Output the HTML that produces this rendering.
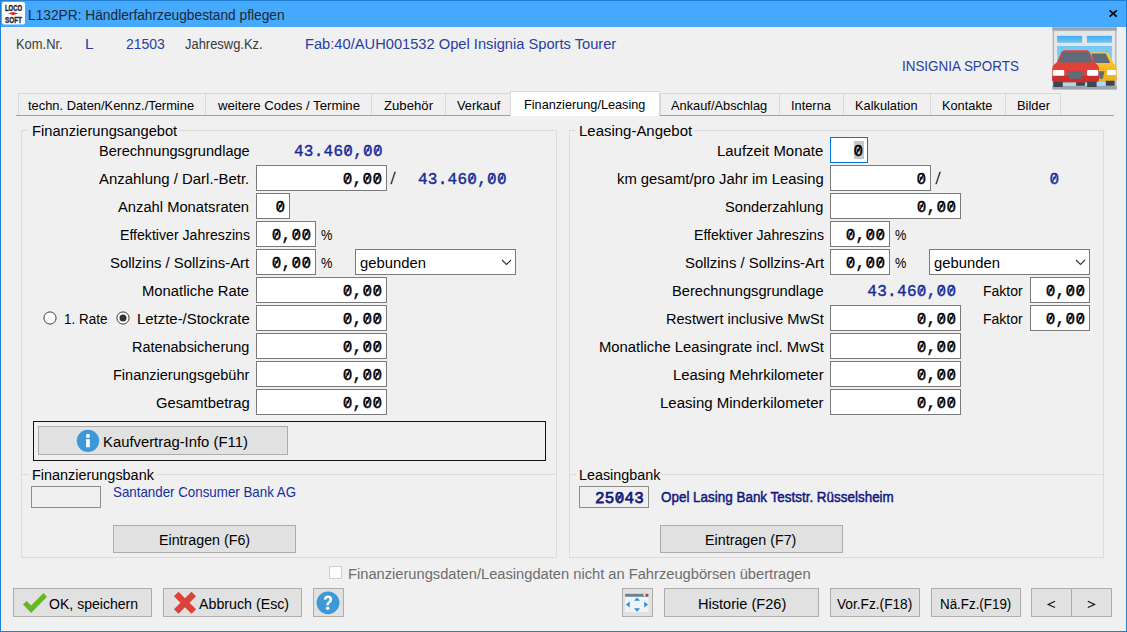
<!DOCTYPE html>
<html><head><meta charset="utf-8"><style>
html,body{margin:0;padding:0;width:1127px;height:632px;overflow:hidden;background:#f0f0f0}
body{position:relative;font-family:"Liberation Sans", sans-serif;}
.a{position:absolute;}
.t{position:absolute;white-space:nowrap;line-height:1;transform-origin:0 0;}
</style></head><body>
<div class="a" style="left:0px;top:0px;width:1127px;height:1px;background:#1f80d6;"></div>
<div class="a" style="left:0px;top:0px;width:1px;height:632px;background:#1f80d6;"></div>
<div class="a" style="left:1126px;top:0px;width:1px;height:632px;background:#1f80d6;"></div>
<div class="a" style="left:0px;top:631px;width:1127px;height:1px;background:#1f80d6;"></div>
<div class="a" style="left:1px;top:1px;width:1125px;height:26px;background:#45a9fd;"></div>
<span class="t" style="left:27.50px;top:7px;font-size:15.5px;color:#202830;transform:scaleX(0.8864);">L132PR: Händlerfahrzeugbestand pflegen</span>
<svg class="a" style="left:1108px;top:9px" width="11" height="10" viewBox="0 0 11 10"><path d="M1.6 1.3 L8.8 7.7 M8.8 1.3 L1.6 7.7" stroke="#000" stroke-width="1.6"/></svg>
<svg class="a" style="left:0;top:0" width="28" height="28" viewBox="0 0 632 632">
<rect x="45" y="45" width="520" height="510" rx="50" fill="#fff"/>
<text x="112" y="252" font-family="Liberation Sans" font-weight="700" font-size="215" textLength="386" lengthAdjust="spacingAndGlyphs" fill="#23262b" stroke="#23262b" stroke-width="10">LOCO</text>
<text x="112" y="512" font-family="Liberation Sans" font-weight="700" font-size="205" textLength="383" lengthAdjust="spacingAndGlyphs" fill="#2a2d33" stroke="#2a2d33" stroke-width="10">SOFT</text>
<rect x="110" y="299" width="390" height="6" fill="#c8c8c8"/>
<path d="M185 303 L295 272 L410 303 L295 336 Z" fill="#e8141a"/>
</svg>
<span class="t" style="left:15.60px;top:36px;font-size:15.5px;color:#3a3a3a;transform:scaleX(0.8339);">Kom.Nr.</span>
<span class="t" style="left:85.00px;top:36px;font-size:15.5px;color:#2740a2;">L</span>
<span class="t" style="left:126.40px;top:36px;font-size:15.5px;color:#2740a2;transform:scaleX(0.9026);">21503</span>
<span class="t" style="left:185.20px;top:36px;font-size:15.5px;color:#3a3a3a;transform:scaleX(0.8344);">Jahreswg.Kz.</span>
<span class="t" style="left:304.50px;top:36px;font-size:15.5px;color:#2740a2;transform:scaleX(0.9465);">Fab:40/AUH001532 Opel Insignia Sports Tourer</span>
<span class="t" style="left:901.80px;top:58px;font-size:15.5px;color:#2740a2;transform:scaleX(0.8658);">INSIGNIA SPORTS</span>
<svg class="a" style="left:1040px;top:20px" width="87" height="80" viewBox="0 0 687 632">
<rect x="97" y="57" width="510" height="30" fill="#9aa5b0"/>
<rect x="103" y="85" width="498" height="440" fill="#e3e7ea"/>
<rect x="100" y="85" width="10" height="440" fill="#a9b2ba"/>
<rect x="594" y="85" width="10" height="440" fill="#a9b2ba"/>
<defs><linearGradient id="gw" x1="0" y1="0" x2="0" y2="1"><stop offset="0" stop-color="#42adf0"/><stop offset="1" stop-color="#72c6f3"/></linearGradient>
<linearGradient id="gy" x1="0" y1="0" x2="0" y2="1"><stop offset="0" stop-color="#fbcb3a"/><stop offset="1" stop-color="#f0ae1c"/></linearGradient>
<linearGradient id="go" x1="0" y1="0" x2="0" y2="1"><stop offset="0" stop-color="#76c6f4"/><stop offset="1" stop-color="#a9dcf6"/></linearGradient></defs>
<rect x="135" y="125" width="198" height="55" fill="url(#gw)"/>
<rect x="370" y="125" width="198" height="55" fill="url(#gw)"/>
<rect x="135" y="205" width="433" height="315" fill="url(#go)"/>
<rect x="97" y="520" width="510" height="30" fill="#9aa5b0"/>
<path d="M400 255 L520 255 Q540 258 548 275 L580 345 L600 360 Q607 370 605 400 L605 470 Q600 485 585 485 L445 485 L445 340 Z" fill="url(#gy)"/>
<path d="M405 265 L520 265 L555 340 L425 340 Z" fill="#5e6b78"/>
<rect x="530" y="395" width="70" height="40" rx="6" fill="#fff"/>
<path d="M460 405 L510 405 L495 465 L470 465 Z" fill="#5e6b78"/>
<rect x="520" y="480" width="70" height="40" rx="4" fill="#3d4650"/>
<rect x="285" y="485" width="70" height="35" rx="4" fill="#3d4650"/>
<path d="M190 238 L370 238 Q385 240 392 255 L430 335 L455 355 Q465 365 465 385 L465 470 Q462 492 440 492 L120 492 Q97 490 97 470 L97 385 Q97 365 107 355 L132 335 L168 255 Q175 240 190 238 Z" fill="#e0413a"/>
<path d="M97 440 L465 440 L465 470 Q462 492 440 492 L120 492 Q97 490 97 470 Z" fill="#c9302c"/>
<path d="M180 255 L380 255 L412 335 L148 335 Z" fill="#5e6b78"/>
<rect x="103" y="395" width="88" height="45" rx="6" fill="#fff"/>
<rect x="372" y="395" width="88" height="45" rx="6" fill="#fff"/>
<path d="M210 405 L350 405 L325 465 L235 465 Z" fill="#5e6b78"/>
<rect x="105" y="488" width="75" height="42" rx="5" fill="#3d4650"/>
<rect x="372" y="488" width="75" height="42" rx="5" fill="#3d4650"/>
</svg>
<div class="a" style="left:18px;top:93px;width:188px;height:23px;border:1px solid #d9d9d9;box-sizing:border-box;"></div>
<div class="a" style="left:205px;top:93px;width:167px;height:23px;border:1px solid #d9d9d9;box-sizing:border-box;"></div>
<div class="a" style="left:371px;top:93px;width:75px;height:23px;border:1px solid #d9d9d9;box-sizing:border-box;"></div>
<div class="a" style="left:445px;top:93px;width:66px;height:23px;border:1px solid #d9d9d9;box-sizing:border-box;"></div>
<div class="a" style="left:660px;top:93px;width:120px;height:23px;border:1px solid #d9d9d9;box-sizing:border-box;"></div>
<div class="a" style="left:779px;top:93px;width:65px;height:23px;border:1px solid #d9d9d9;box-sizing:border-box;"></div>
<div class="a" style="left:843px;top:93px;width:88px;height:23px;border:1px solid #d9d9d9;box-sizing:border-box;"></div>
<div class="a" style="left:930px;top:93px;width:76px;height:23px;border:1px solid #d9d9d9;box-sizing:border-box;"></div>
<div class="a" style="left:1005px;top:93px;width:56px;height:23px;border:1px solid #d9d9d9;box-sizing:border-box;"></div>
<div class="a" style="left:16px;top:115px;width:1098px;height:1px;background:#a0a0a0;"></div>
<span class="t" style="left:27.70px;top:99px;font-size:13.0px;color:#000;transform:scaleX(0.9905);">techn. Daten/Kennz./Termine</span>
<span class="t" style="left:217.70px;top:99px;font-size:13.0px;color:#000;transform:scaleX(1.0150);">weitere Codes / Termine</span>
<span class="t" style="left:384.00px;top:99px;font-size:13.0px;color:#000;transform:scaleX(1.0124);">Zubehör</span>
<span class="t" style="left:456.80px;top:99px;font-size:13.0px;color:#000;transform:scaleX(0.9842);">Verkauf</span>
<span class="t" style="left:670.50px;top:99px;font-size:13.0px;color:#000;transform:scaleX(0.9857);">Ankauf/Abschlag</span>
<span class="t" style="left:790.90px;top:99px;font-size:13.0px;color:#000;transform:scaleX(0.9852);">Interna</span>
<span class="t" style="left:855.00px;top:99px;font-size:13.0px;color:#000;transform:scaleX(0.9843);">Kalkulation</span>
<span class="t" style="left:941.80px;top:99px;font-size:13.0px;color:#000;transform:scaleX(0.9825);">Kontakte</span>
<span class="t" style="left:1017.00px;top:99px;font-size:13.0px;color:#000;transform:scaleX(0.9940);">Bilder</span>
<div class="a" style="left:510px;top:91px;width:150px;height:25px;background:#fff;border:1px solid #d9d9d9;box-sizing:border-box;border-bottom:none;"></div>
<span class="t" style="left:524.30px;top:98px;font-size:13.0px;color:#000;transform:scaleX(0.9767);">Finanzierung/Leasing</span>
<div class="a" style="left:21px;top:130px;width:536px;height:428px;border:1px solid #dcdcdc;box-sizing:border-box;"></div>
<div class="a" style="left:28px;top:128px;width:151px;height:4px;background:#f0f0f0;"></div>
<span class="t" style="left:31.60px;top:123px;font-size:15.5px;color:#000;transform:scaleX(0.9465);">Finanzierungsangebot</span>
<div class="a" style="left:569px;top:130px;width:535px;height:428px;border:1px solid #dcdcdc;box-sizing:border-box;"></div>
<div class="a" style="left:576px;top:128px;width:118px;height:4px;background:#f0f0f0;"></div>
<span class="t" style="left:578.70px;top:123px;font-size:15.5px;color:#000;transform:scaleX(0.9650);">Leasing-Angebot</span>
<div class="a" style="left:22px;top:474px;width:534px;height:1px;background:#dcdcdc;"></div>
<div class="a" style="left:29px;top:472px;width:127px;height:4px;background:#f0f0f0;"></div>
<span class="t" style="left:31.50px;top:467px;font-size:15.5px;color:#000;transform:scaleX(0.9305);">Finanzierungsbank</span>
<div class="a" style="left:570px;top:474px;width:533px;height:1px;background:#dcdcdc;"></div>
<div class="a" style="left:576px;top:472px;width:86px;height:4px;background:#f0f0f0;"></div>
<span class="t" style="left:578.60px;top:467px;font-size:15.5px;color:#000;transform:scaleX(0.9250);">Leasingbank</span>
<span class="t" style="left:98.80px;top:143px;font-size:15.5px;color:#000;transform:scaleX(0.9401);">Berechnungsgrundlage</span>
<span class="t" style="left:99.30px;top:171px;font-size:15.5px;color:#000;transform:scaleX(0.9634);">Anzahlung / Darl.-Betr.</span>
<span class="t" style="left:118.40px;top:199px;font-size:15.5px;color:#000;transform:scaleX(0.9507);">Anzahl Monatsraten</span>
<span class="t" style="left:119.50px;top:227px;font-size:15.5px;color:#000;transform:scaleX(0.9110);">Effektiver Jahreszins</span>
<span class="t" style="left:110.30px;top:255px;font-size:15.5px;color:#000;transform:scaleX(0.9620);">Sollzins / Sollzins-Art</span>
<span class="t" style="left:142.40px;top:283px;font-size:15.5px;color:#000;transform:scaleX(0.9562);">Monatliche Rate</span>
<span class="t" style="left:136.70px;top:311px;font-size:15.5px;color:#000;transform:scaleX(0.9625);">Letzte-/Stockrate</span>
<span class="t" style="left:132.20px;top:339px;font-size:15.5px;color:#000;transform:scaleX(0.9324);">Ratenabsicherung</span>
<span class="t" style="left:113.20px;top:367px;font-size:15.5px;color:#000;transform:scaleX(0.9361);">Finanzierungsgebühr</span>
<span class="t" style="left:155.90px;top:395px;font-size:15.5px;color:#000;transform:scaleX(0.9532);">Gesamtbetrag</span>
<span class="t" style="left:293.60px;top:144px;font-size:16.0px;color:#182c98;font-family:'Liberation Mono',monospace;font-weight:700;letter-spacing:0.3px;transform:scaleX(0.9965);font-weight:400;-webkit-text-stroke:0.4px #182c98;">43.460,00</span>
<div class="a" style="left:256px;top:165px;width:131px;height:26px;background:#fff;border:1px solid #7a7a7a;box-sizing:border-box;"></div>
<span class="t" style="left:342.70px;top:172px;font-size:16.0px;color:#000;font-family:'Liberation Mono',monospace;font-weight:700;letter-spacing:0.3px;font-weight:400;-webkit-text-stroke:0.4px #000;">0,00</span>
<span class="t" style="left:389.60px;top:172px;font-size:16.0px;color:#000;font-family:'Liberation Mono',monospace;transform:scaleX(0.6250);-webkit-text-stroke:0.4px #000;">/</span>
<span class="t" style="left:417.50px;top:172px;font-size:16.0px;color:#182c98;font-family:'Liberation Mono',monospace;font-weight:700;letter-spacing:0.3px;transform:scaleX(0.9965);font-weight:400;-webkit-text-stroke:0.4px #182c98;">43.460,00</span>
<div class="a" style="left:256px;top:193px;width:34px;height:26px;background:#fff;border:1px solid #7a7a7a;box-sizing:border-box;"></div>
<span class="t" style="left:275.40px;top:200px;font-size:16.0px;color:#000;font-family:'Liberation Mono',monospace;font-weight:700;letter-spacing:0.3px;font-weight:400;-webkit-text-stroke:0.4px #000;">0</span>
<div class="a" style="left:256px;top:221px;width:60px;height:26px;background:#fff;border:1px solid #7a7a7a;box-sizing:border-box;"></div>
<span class="t" style="left:271.70px;top:228px;font-size:16.0px;color:#000;font-family:'Liberation Mono',monospace;font-weight:700;letter-spacing:0.3px;font-weight:400;-webkit-text-stroke:0.4px #000;">0,00</span>
<span class="t" style="left:321.20px;top:227px;font-size:15.5px;color:#000;transform:scaleX(0.8261);">%</span>
<div class="a" style="left:256px;top:249px;width:60px;height:26px;background:#fff;border:1px solid #7a7a7a;box-sizing:border-box;"></div>
<span class="t" style="left:271.70px;top:256px;font-size:16.0px;color:#000;font-family:'Liberation Mono',monospace;font-weight:700;letter-spacing:0.3px;font-weight:400;-webkit-text-stroke:0.4px #000;">0,00</span>
<span class="t" style="left:321.20px;top:255px;font-size:15.5px;color:#000;transform:scaleX(0.8261);">%</span>
<div class="a" style="left:355px;top:249px;width:161px;height:26px;background:#fff;border:1px solid #7a7a7a;box-sizing:border-box;"></div>
<span class="t" style="left:360.30px;top:255px;font-size:15.5px;color:#000;transform:scaleX(0.9565);">gebunden</span>
<svg class="a" style="left:501px;top:259px" width="11" height="7" viewBox="0 0 11 7"><path d="M1 1 L5.5 5.5 L10 1" stroke="#333" stroke-width="1.1" fill="none"/></svg>
<div class="a" style="left:256px;top:277px;width:131px;height:26px;background:#fff;border:1px solid #7a7a7a;box-sizing:border-box;"></div>
<span class="t" style="left:342.70px;top:284px;font-size:16.0px;color:#000;font-family:'Liberation Mono',monospace;font-weight:700;letter-spacing:0.3px;font-weight:400;-webkit-text-stroke:0.4px #000;">0,00</span>
<div class="a" style="left:256px;top:305px;width:131px;height:26px;background:#fff;border:1px solid #7a7a7a;box-sizing:border-box;"></div>
<span class="t" style="left:342.70px;top:312px;font-size:16.0px;color:#000;font-family:'Liberation Mono',monospace;font-weight:700;letter-spacing:0.3px;font-weight:400;-webkit-text-stroke:0.4px #000;">0,00</span>
<div class="a" style="left:256px;top:333px;width:131px;height:26px;background:#fff;border:1px solid #7a7a7a;box-sizing:border-box;"></div>
<span class="t" style="left:342.70px;top:340px;font-size:16.0px;color:#000;font-family:'Liberation Mono',monospace;font-weight:700;letter-spacing:0.3px;font-weight:400;-webkit-text-stroke:0.4px #000;">0,00</span>
<div class="a" style="left:256px;top:361px;width:131px;height:26px;background:#fff;border:1px solid #7a7a7a;box-sizing:border-box;"></div>
<span class="t" style="left:342.70px;top:368px;font-size:16.0px;color:#000;font-family:'Liberation Mono',monospace;font-weight:700;letter-spacing:0.3px;font-weight:400;-webkit-text-stroke:0.4px #000;">0,00</span>
<div class="a" style="left:256px;top:389px;width:131px;height:26px;background:#fff;border:1px solid #7a7a7a;box-sizing:border-box;"></div>
<span class="t" style="left:342.70px;top:396px;font-size:16.0px;color:#000;font-family:'Liberation Mono',monospace;font-weight:700;letter-spacing:0.3px;font-weight:400;-webkit-text-stroke:0.4px #000;">0,00</span>
<svg class="a" style="left:43.4px;top:310.6px" width="14" height="14" viewBox="0 0 14 14"><circle cx="7" cy="7" r="6.1" fill="#fff" stroke="#3c3c3c" stroke-width="1"/></svg>
<span class="t" style="left:63.80px;top:311px;font-size:15.5px;color:#000;transform:scaleX(0.8680);">1. Rate</span>
<svg class="a" style="left:116.4px;top:310.6px" width="14" height="14" viewBox="0 0 14 14"><circle cx="7" cy="7" r="6.1" fill="#fff" stroke="#3c3c3c" stroke-width="1"/><circle cx="7" cy="7" r="3.5" fill="#333"/></svg>
<div class="a" style="left:33px;top:421px;width:513px;height:40px;border:1.5px solid #111;box-sizing:border-box;"></div>
<div class="a" style="left:38px;top:426px;width:250px;height:29px;background:#e1e1e1;border:1px solid #adadad;box-sizing:border-box;"></div>
<svg class="a" style="left:74px;top:428px" width="28" height="26" viewBox="0 0 681 632">
<circle cx="340" cy="312" r="272" fill="#3d98d8"/>
<circle cx="340" cy="192" r="50" fill="#fff"/>
<path d="M290 275 L385 275 L385 465 L295 465 L295 320 L290 310 Z" fill="#fff"/>
</svg>
<span class="t" style="left:102.50px;top:434px;font-size:15.5px;color:#000;transform:scaleX(0.9570);">Kaufvertrag-Info (F11)</span>
<div class="a" style="left:31px;top:486px;width:70px;height:22px;background:#f0f0f0;border:1px solid #8c8c8c;box-sizing:border-box;"></div>
<span class="t" style="left:113.20px;top:485px;font-size:14.5px;color:#14309e;transform:scaleX(0.9196);">Santander Consumer Bank AG</span>
<div class="a" style="left:113px;top:525px;width:183px;height:28px;background:#e1e1e1;border:1px solid #adadad;box-sizing:border-box;"></div>
<span class="t" style="left:158.70px;top:532px;font-size:15.5px;color:#000;transform:scaleX(0.9193);">Eintragen (F6)</span>
<span class="t" style="left:717.40px;top:143px;font-size:15.5px;color:#000;transform:scaleX(0.9628);">Laufzeit Monate</span>
<span class="t" style="left:616.90px;top:171px;font-size:15.5px;color:#000;transform:scaleX(0.9561);">km gesamt/pro Jahr im Leasing</span>
<span class="t" style="left:725.20px;top:199px;font-size:15.5px;color:#000;transform:scaleX(0.9434);">Sonderzahlung</span>
<span class="t" style="left:693.60px;top:227px;font-size:15.5px;color:#000;transform:scaleX(0.9110);">Effektiver Jahreszins</span>
<span class="t" style="left:684.50px;top:255px;font-size:15.5px;color:#000;transform:scaleX(0.9613);">Sollzins / Sollzins-Art</span>
<span class="t" style="left:672.00px;top:283px;font-size:15.5px;color:#000;transform:scaleX(0.9457);">Berechnungsgrundlage</span>
<span class="t" style="left:665.80px;top:311px;font-size:15.5px;color:#000;transform:scaleX(0.9393);">Restwert inclusive MwSt</span>
<span class="t" style="left:598.70px;top:339px;font-size:15.5px;color:#000;transform:scaleX(0.9562);">Monatliche Leasingrate incl. MwSt</span>
<span class="t" style="left:673.00px;top:367px;font-size:15.5px;color:#000;transform:scaleX(0.9605);">Leasing Mehrkilometer</span>
<span class="t" style="left:660.00px;top:395px;font-size:15.5px;color:#000;transform:scaleX(0.9686);">Leasing Minderkilometer</span>
<div class="a" style="left:830px;top:137px;width:38px;height:26px;background:#fff;border:1px solid #0078d7;box-sizing:border-box;"></div>
<div class="a" style="left:854px;top:141px;width:10px;height:18px;background:#c8c8c8;"></div>
<span class="t" style="left:853.40px;top:144px;font-size:16.0px;color:#000;font-family:'Liberation Mono',monospace;font-weight:700;letter-spacing:0.3px;font-weight:400;-webkit-text-stroke:0.4px #000;">0</span>
<div class="a" style="left:830px;top:165px;width:101px;height:26px;background:#fff;border:1px solid #7a7a7a;box-sizing:border-box;"></div>
<span class="t" style="left:916.40px;top:172px;font-size:16.0px;color:#000;font-family:'Liberation Mono',monospace;font-weight:700;letter-spacing:0.3px;font-weight:400;-webkit-text-stroke:0.4px #000;">0</span>
<span class="t" style="left:935.00px;top:172px;font-size:16.0px;color:#000;font-family:'Liberation Mono',monospace;transform:scaleX(0.6250);-webkit-text-stroke:0.4px #000;">/</span>
<span class="t" style="left:1049.40px;top:172px;font-size:16.0px;color:#182c98;font-family:'Liberation Mono',monospace;font-weight:700;letter-spacing:0.3px;font-weight:400;-webkit-text-stroke:0.4px #182c98;">0</span>
<div class="a" style="left:830px;top:193px;width:131px;height:26px;background:#fff;border:1px solid #7a7a7a;box-sizing:border-box;"></div>
<span class="t" style="left:916.70px;top:200px;font-size:16.0px;color:#000;font-family:'Liberation Mono',monospace;font-weight:700;letter-spacing:0.3px;font-weight:400;-webkit-text-stroke:0.4px #000;">0,00</span>
<div class="a" style="left:830px;top:221px;width:60px;height:26px;background:#fff;border:1px solid #7a7a7a;box-sizing:border-box;"></div>
<span class="t" style="left:845.70px;top:228px;font-size:16.0px;color:#000;font-family:'Liberation Mono',monospace;font-weight:700;letter-spacing:0.3px;font-weight:400;-webkit-text-stroke:0.4px #000;">0,00</span>
<span class="t" style="left:895.40px;top:227px;font-size:15.5px;color:#000;transform:scaleX(0.8188);">%</span>
<div class="a" style="left:830px;top:249px;width:60px;height:26px;background:#fff;border:1px solid #7a7a7a;box-sizing:border-box;"></div>
<span class="t" style="left:845.70px;top:256px;font-size:16.0px;color:#000;font-family:'Liberation Mono',monospace;font-weight:700;letter-spacing:0.3px;font-weight:400;-webkit-text-stroke:0.4px #000;">0,00</span>
<span class="t" style="left:895.40px;top:255px;font-size:15.5px;color:#000;transform:scaleX(0.8188);">%</span>
<div class="a" style="left:929px;top:249px;width:161px;height:26px;background:#fff;border:1px solid #7a7a7a;box-sizing:border-box;"></div>
<span class="t" style="left:934.30px;top:255px;font-size:15.5px;color:#000;transform:scaleX(0.9565);">gebunden</span>
<svg class="a" style="left:1075px;top:259px" width="11" height="7" viewBox="0 0 11 7"><path d="M1 1 L5.5 5.5 L10 1" stroke="#333" stroke-width="1.1" fill="none"/></svg>
<span class="t" style="left:867.30px;top:284px;font-size:16.0px;color:#182c98;font-family:'Liberation Mono',monospace;font-weight:700;letter-spacing:0.3px;font-weight:400;-webkit-text-stroke:0.4px #182c98;">43.460,00</span>
<span class="t" style="left:982.60px;top:283px;font-size:15.5px;color:#000;transform:scaleX(0.9043);">Faktor</span>
<div class="a" style="left:1030px;top:277px;width:60px;height:26px;background:#fff;border:1px solid #7a7a7a;box-sizing:border-box;"></div>
<span class="t" style="left:1045.70px;top:284px;font-size:16.0px;color:#000;font-family:'Liberation Mono',monospace;font-weight:700;letter-spacing:0.3px;font-weight:400;-webkit-text-stroke:0.4px #000;">0,00</span>
<div class="a" style="left:830px;top:305px;width:131px;height:26px;background:#fff;border:1px solid #7a7a7a;box-sizing:border-box;"></div>
<span class="t" style="left:916.70px;top:312px;font-size:16.0px;color:#000;font-family:'Liberation Mono',monospace;font-weight:700;letter-spacing:0.3px;font-weight:400;-webkit-text-stroke:0.4px #000;">0,00</span>
<span class="t" style="left:982.60px;top:311px;font-size:15.5px;color:#000;transform:scaleX(0.9043);">Faktor</span>
<div class="a" style="left:1030px;top:305px;width:60px;height:26px;background:#fff;border:1px solid #7a7a7a;box-sizing:border-box;"></div>
<span class="t" style="left:1045.70px;top:312px;font-size:16.0px;color:#000;font-family:'Liberation Mono',monospace;font-weight:700;letter-spacing:0.3px;font-weight:400;-webkit-text-stroke:0.4px #000;">0,00</span>
<div class="a" style="left:830px;top:333px;width:131px;height:26px;background:#fff;border:1px solid #7a7a7a;box-sizing:border-box;"></div>
<span class="t" style="left:916.70px;top:340px;font-size:16.0px;color:#000;font-family:'Liberation Mono',monospace;font-weight:700;letter-spacing:0.3px;font-weight:400;-webkit-text-stroke:0.4px #000;">0,00</span>
<div class="a" style="left:830px;top:361px;width:131px;height:26px;background:#fff;border:1px solid #7a7a7a;box-sizing:border-box;"></div>
<span class="t" style="left:916.70px;top:368px;font-size:16.0px;color:#000;font-family:'Liberation Mono',monospace;font-weight:700;letter-spacing:0.3px;font-weight:400;-webkit-text-stroke:0.4px #000;">0,00</span>
<div class="a" style="left:830px;top:389px;width:131px;height:26px;background:#fff;border:1px solid #7a7a7a;box-sizing:border-box;"></div>
<span class="t" style="left:916.70px;top:396px;font-size:16.0px;color:#000;font-family:'Liberation Mono',monospace;font-weight:700;letter-spacing:0.3px;font-weight:400;-webkit-text-stroke:0.4px #000;">0,00</span>
<div class="a" style="left:579px;top:486px;width:70px;height:22px;background:#f0f0f0;border:1px solid #8c8c8c;box-sizing:border-box;"></div>
<span class="t" style="left:595.20px;top:491px;font-size:16.0px;color:#161a7c;font-family:'Liberation Mono',monospace;font-weight:700;letter-spacing:0.3px;transform:scaleX(0.9917);font-weight:400;-webkit-text-stroke:0.75px #161a7c;">25043</span>
<span class="t" style="left:661.00px;top:489px;font-size:15.5px;color:#121880;transform:scaleX(0.8670);-webkit-text-stroke:0.5px #121880;">Opel Lasing Bank Teststr. Rüsselsheim</span>
<div class="a" style="left:660px;top:525px;width:183px;height:28px;background:#e1e1e1;border:1px solid #adadad;box-sizing:border-box;"></div>
<span class="t" style="left:705.30px;top:532px;font-size:15.5px;color:#000;transform:scaleX(0.9223);">Eintragen (F7)</span>
<div class="a" style="left:329px;top:566px;width:13px;height:13px;box-sizing:border-box;border:1px solid #cfcfcf;background:#fdfdfd"></div>
<span class="t" style="left:347.50px;top:566px;font-size:15.5px;color:#6d6d6d;transform:scaleX(0.9470);">Finanzierungsdaten/Leasingdaten nicht an Fahrzeugbörsen übertragen</span>
<div class="a" style="left:13px;top:588px;width:139px;height:29px;background:#e1e1e1;border:1px solid #adadad;box-sizing:border-box;"></div>
<svg class="a" style="left:15px;top:588px" width="35" height="30" viewBox="0 0 737 632">
<path d="M168 350 L245 272 L340 370 L600 105 L672 185 L340 525 Z" fill="#63b924"/>
</svg>
<span class="t" style="left:49.40px;top:596px;font-size:15.5px;color:#000;transform:scaleX(0.9073);">OK, speichern</span>
<div class="a" style="left:163px;top:588px;width:139px;height:29px;background:#e1e1e1;border:1px solid #adadad;box-sizing:border-box;"></div>
<svg class="a" style="left:168px;top:588px" width="35" height="30" viewBox="0 0 737 632">
<path d="M125 175 L220 80 L357 217 L495 80 L590 175 L453 312 L590 450 L495 545 L357 408 L220 545 L125 450 L262 312 Z" fill="#dc4238"/>
</svg>
<span class="t" style="left:199.10px;top:596px;font-size:15.5px;color:#000;transform:scaleX(0.9175);">Abbruch (Esc)</span>
<div class="a" style="left:313px;top:588px;width:31px;height:29px;background:#e1e1e1;border:1px solid #adadad;box-sizing:border-box;"></div>
<svg class="a" style="left:310px;top:586px" width="38" height="34" viewBox="0 0 706 632">
<circle cx="335" cy="312" r="212" fill="#3d98d8"/>
<path d="M258 250 Q262 178 335 178 Q412 180 412 250 Q410 292 372 315 Q352 328 350 360 L305 360 Q302 312 340 288 Q365 272 362 250 Q360 225 335 225 Q305 225 300 255 Z" fill="#fff"/>
<circle cx="328" cy="412" r="32" fill="#fff"/>
</svg>
<div class="a" style="left:622px;top:588px;width:31px;height:29px;background:#e1e1e1;border:1px solid #adadad;box-sizing:border-box;"></div>
<svg class="a" style="left:620px;top:586px" width="36" height="34" viewBox="0 0 669 632">
<rect x="95" y="145" width="435" height="340" fill="#eef3f8"/>
<rect x="95" y="145" width="435" height="55" fill="#6e808e"/>
<rect x="440" y="150" width="30" height="40" fill="#fff"/>
<rect x="480" y="150" width="40" height="40" fill="#e0302a"/>
<path d="M262 275 L317 212 L372 275 Z" fill="#2f8fd6"/>
<path d="M262 412 L317 478 L372 412 Z" fill="#2f8fd6"/>
<path d="M180 290 L110 345 L180 400 Z" fill="#2f8fd6"/>
<path d="M450 290 L520 345 L450 400 Z" fill="#2f8fd6"/>
</svg>
<div class="a" style="left:664px;top:588px;width:155px;height:29px;background:#e1e1e1;border:1px solid #adadad;box-sizing:border-box;"></div>
<span class="t" style="left:697.50px;top:596px;font-size:15.5px;color:#000;transform:scaleX(0.9404);">Historie (F26)</span>
<div class="a" style="left:830px;top:588px;width:90px;height:29px;background:#e1e1e1;border:1px solid #adadad;box-sizing:border-box;"></div>
<span class="t" style="left:837.30px;top:596px;font-size:15.5px;color:#000;transform:scaleX(0.8828);">Vor.Fz.(F18)</span>
<div class="a" style="left:931px;top:588px;width:90px;height:29px;background:#e1e1e1;border:1px solid #adadad;box-sizing:border-box;"></div>
<span class="t" style="left:940.30px;top:596px;font-size:15.5px;color:#000;transform:scaleX(0.8622);">Nä.Fz.(F19)</span>
<div class="a" style="left:1031px;top:588px;width:81px;height:29px;background:#e1e1e1;border:1px solid #adadad;box-sizing:border-box;"></div>
<div class="a" style="left:1071px;top:589px;width:1px;height:27px;background:#adadad;"></div>
<svg class="a" style="left:1040px;top:592px" width="60" height="22" viewBox="0 0 60 22"><path d="M15 9.2 L8.2 12.4 L15 15.6 M47.8 9.2 L54.6 12.4 L47.8 15.6" stroke="#111" stroke-width="1.15" fill="none"/></svg>
<svg class="a" style="left:0;top:0" width="1127" height="632"><path d="M349.71 146.8 L345.71 154.2" stroke="#182c98" stroke-width="1.25"/><path d="M369.44 146.8 L365.44 154.2" stroke="#182c98" stroke-width="1.25"/><path d="M379.30 146.8 L375.30 154.2" stroke="#182c98" stroke-width="1.25"/><path d="M349.50 174.8 L345.50 182.2" stroke="#000" stroke-width="1.25"/><path d="M369.30 174.8 L365.30 182.2" stroke="#000" stroke-width="1.25"/><path d="M379.20 174.8 L375.20 182.2" stroke="#000" stroke-width="1.25"/><path d="M473.61 174.8 L469.61 182.2" stroke="#182c98" stroke-width="1.25"/><path d="M493.34 174.8 L489.34 182.2" stroke="#182c98" stroke-width="1.25"/><path d="M503.20 174.8 L499.20 182.2" stroke="#182c98" stroke-width="1.25"/><path d="M282.20 202.8 L278.20 210.2" stroke="#000" stroke-width="1.25"/><path d="M278.50 230.8 L274.50 238.2" stroke="#000" stroke-width="1.25"/><path d="M298.30 230.8 L294.30 238.2" stroke="#000" stroke-width="1.25"/><path d="M308.20 230.8 L304.20 238.2" stroke="#000" stroke-width="1.25"/><path d="M278.50 258.8 L274.50 266.2" stroke="#000" stroke-width="1.25"/><path d="M298.30 258.8 L294.30 266.2" stroke="#000" stroke-width="1.25"/><path d="M308.20 258.8 L304.20 266.2" stroke="#000" stroke-width="1.25"/><path d="M349.50 286.8 L345.50 294.2" stroke="#000" stroke-width="1.25"/><path d="M369.30 286.8 L365.30 294.2" stroke="#000" stroke-width="1.25"/><path d="M379.20 286.8 L375.20 294.2" stroke="#000" stroke-width="1.25"/><path d="M349.50 314.8 L345.50 322.2" stroke="#000" stroke-width="1.25"/><path d="M369.30 314.8 L365.30 322.2" stroke="#000" stroke-width="1.25"/><path d="M379.20 314.8 L375.20 322.2" stroke="#000" stroke-width="1.25"/><path d="M349.50 342.8 L345.50 350.2" stroke="#000" stroke-width="1.25"/><path d="M369.30 342.8 L365.30 350.2" stroke="#000" stroke-width="1.25"/><path d="M379.20 342.8 L375.20 350.2" stroke="#000" stroke-width="1.25"/><path d="M349.50 370.8 L345.50 378.2" stroke="#000" stroke-width="1.25"/><path d="M369.30 370.8 L365.30 378.2" stroke="#000" stroke-width="1.25"/><path d="M379.20 370.8 L375.20 378.2" stroke="#000" stroke-width="1.25"/><path d="M349.50 398.8 L345.50 406.2" stroke="#000" stroke-width="1.25"/><path d="M369.30 398.8 L365.30 406.2" stroke="#000" stroke-width="1.25"/><path d="M379.20 398.8 L375.20 406.2" stroke="#000" stroke-width="1.25"/><path d="M860.20 146.8 L856.20 154.2" stroke="#000" stroke-width="1.25"/><path d="M923.20 174.8 L919.20 182.2" stroke="#000" stroke-width="1.25"/><path d="M1056.20 174.8 L1052.20 182.2" stroke="#182c98" stroke-width="1.25"/><path d="M923.50 202.8 L919.50 210.2" stroke="#000" stroke-width="1.25"/><path d="M943.30 202.8 L939.30 210.2" stroke="#000" stroke-width="1.25"/><path d="M953.20 202.8 L949.20 210.2" stroke="#000" stroke-width="1.25"/><path d="M852.50 230.8 L848.50 238.2" stroke="#000" stroke-width="1.25"/><path d="M872.30 230.8 L868.30 238.2" stroke="#000" stroke-width="1.25"/><path d="M882.20 230.8 L878.20 238.2" stroke="#000" stroke-width="1.25"/><path d="M852.50 258.8 L848.50 266.2" stroke="#000" stroke-width="1.25"/><path d="M872.30 258.8 L868.30 266.2" stroke="#000" stroke-width="1.25"/><path d="M882.20 258.8 L878.20 266.2" stroke="#000" stroke-width="1.25"/><path d="M923.59 286.8 L919.59 294.2" stroke="#182c98" stroke-width="1.25"/><path d="M943.39 286.8 L939.39 294.2" stroke="#182c98" stroke-width="1.25"/><path d="M953.29 286.8 L949.29 294.2" stroke="#182c98" stroke-width="1.25"/><path d="M1052.50 286.8 L1048.50 294.2" stroke="#000" stroke-width="1.25"/><path d="M1072.30 286.8 L1068.30 294.2" stroke="#000" stroke-width="1.25"/><path d="M1082.20 286.8 L1078.20 294.2" stroke="#000" stroke-width="1.25"/><path d="M923.50 314.8 L919.50 322.2" stroke="#000" stroke-width="1.25"/><path d="M943.30 314.8 L939.30 322.2" stroke="#000" stroke-width="1.25"/><path d="M953.20 314.8 L949.20 322.2" stroke="#000" stroke-width="1.25"/><path d="M1052.50 314.8 L1048.50 322.2" stroke="#000" stroke-width="1.25"/><path d="M1072.30 314.8 L1068.30 322.2" stroke="#000" stroke-width="1.25"/><path d="M1082.20 314.8 L1078.20 322.2" stroke="#000" stroke-width="1.25"/><path d="M923.50 342.8 L919.50 350.2" stroke="#000" stroke-width="1.25"/><path d="M943.30 342.8 L939.30 350.2" stroke="#000" stroke-width="1.25"/><path d="M953.20 342.8 L949.20 350.2" stroke="#000" stroke-width="1.25"/><path d="M923.50 370.8 L919.50 378.2" stroke="#000" stroke-width="1.25"/><path d="M943.30 370.8 L939.30 378.2" stroke="#000" stroke-width="1.25"/><path d="M953.20 370.8 L949.20 378.2" stroke="#000" stroke-width="1.25"/><path d="M923.50 398.8 L919.50 406.2" stroke="#000" stroke-width="1.25"/><path d="M943.30 398.8 L939.30 406.2" stroke="#000" stroke-width="1.25"/><path d="M953.20 398.8 L949.20 406.2" stroke="#000" stroke-width="1.25"/><path d="M621.60 493.8 L617.60 501.2" stroke="#161a7c" stroke-width="1.25"/></svg>
</body></html>
